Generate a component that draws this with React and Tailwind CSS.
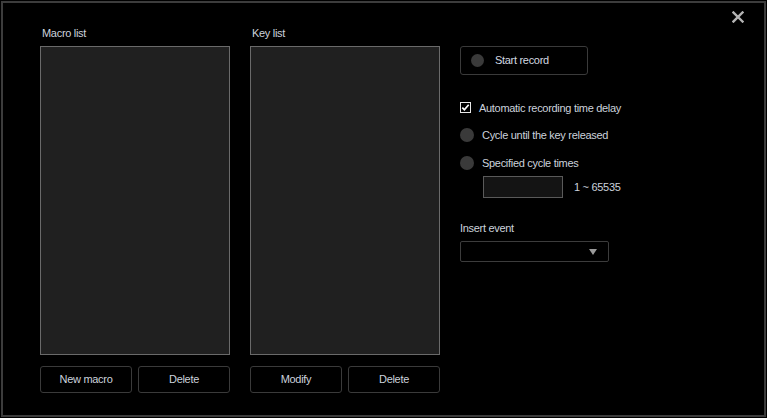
import React from 'react';

const font = { fontFamily: '"Liberation Sans", Arial, sans-serif' };

const Radio = ({ label, top }) => (
  <div className={`flex items-center h-[14px] ${top}`}>
    <span className="block w-[14px] h-[14px] rounded-full bg-[#3a3a3a]" />
    <span className="ml-[8px] text-[11px] tracking-[-0.3px] text-[#ccd2dc] leading-none">{label}</span>
  </div>
);

const Btn = ({ children }) => (
  <button className="h-[27px] rounded-[3px] border border-[#3a3a3a] bg-black text-[11px] tracking-[-0.3px] text-[#ccd2dc]">
    {children}
  </button>
);

const ListColumn = ({ title, left, right }) => (
  <div className="w-[190px] flex flex-col">
    <div className="h-[14px] pl-[2px] text-[11px] tracking-[-0.3px] text-[#ccd2dc] leading-[14px]">{title}</div>
    <div className="mt-[6px] h-[309px] bg-[#202020] border border-[#6a6a6a]" />
    <div className="mt-[11px] grid grid-cols-2 gap-[6px]">
      <Btn>{left}</Btn>
      <Btn>{right}</Btn>
    </div>
  </div>
);

export default function App() {
  return (
    <div className="w-[767px] h-[418px] bg-black p-px" style={font}>
      <div className="relative h-[416px] w-[765px] border-2 border-[#3c3c3c] flex pl-[37px] pt-[23px]">
        {/* close */}
        <svg className="absolute left-[729px] top-[8px]" width="12" height="12" viewBox="0 0 12 12">
          <path d="M1.5 1.5 L10.5 10.5 M10.5 1.5 L1.5 10.5" stroke="#b4b4b4" strokeWidth="2.4" strokeLinecap="square" />
        </svg>

        <ListColumn title="Macro list" left="New macro" right="Delete" />
        <div className="w-[20px]" />
        <ListColumn title="Key list" left="Modify" right="Delete" />
        <div className="w-[20px]" />

        <div className="flex flex-col pt-[20px]">
          <button className="flex items-center w-[128px] h-[29px] rounded-[3px] border border-[#3a3a3a] bg-black pl-[10px]">
            <span className="block w-[13px] h-[13px] rounded-full bg-[#3a3a3a]" />
            <span className="ml-[11px] text-[11px] tracking-[-0.3px] text-[#d4d8e0] leading-none">Start record</span>
          </button>

          <div className="flex items-center h-[14px] mt-[26px]">
            <svg width="11" height="11" viewBox="0 0 11 11" className="mt-[-1px]">
              <rect x="0.5" y="0.5" width="10" height="10" fill="#000" stroke="#e8e8e8" />
              <path d="M2.3 5.6 L4.4 7.7 L8.7 2.8" fill="none" stroke="#ffffff" strokeWidth="1.7" />
            </svg>
            <span className="ml-[8px] text-[11px] tracking-[-0.3px] text-[#ccd2dc] leading-none">Automatic recording time delay</span>
          </div>

          <Radio label="Cycle until the key released" top="mt-[13px]" />
          <Radio label="Specified cycle times" top="mt-[14px]" />

          <div className="flex items-center mt-[6px] pl-[23px]">
            <div className="w-[80px] h-[22px] bg-[#141414] border border-[#5a5a5a]" />
            <span className="ml-[11px] text-[11px] tracking-[-0.3px] text-[#ccd2dc] leading-none">1 ~ 65535</span>
          </div>

          <div className="mt-[23px] h-[14px] text-[11px] tracking-[-0.3px] text-[#ccd2dc] leading-[14px]">Insert event</div>

          <div className="mt-[6px] w-[149px] h-[21px] rounded-[2px] border border-[#3c3c3c] bg-black flex items-center justify-end pr-[11px]">
            <svg width="8" height="6" viewBox="0 0 8 6">
              <path d="M0 0 L8 0 L4 6 Z" fill="#9a9a9a" />
            </svg>
          </div>
        </div>
      </div>
    </div>
  );
}
